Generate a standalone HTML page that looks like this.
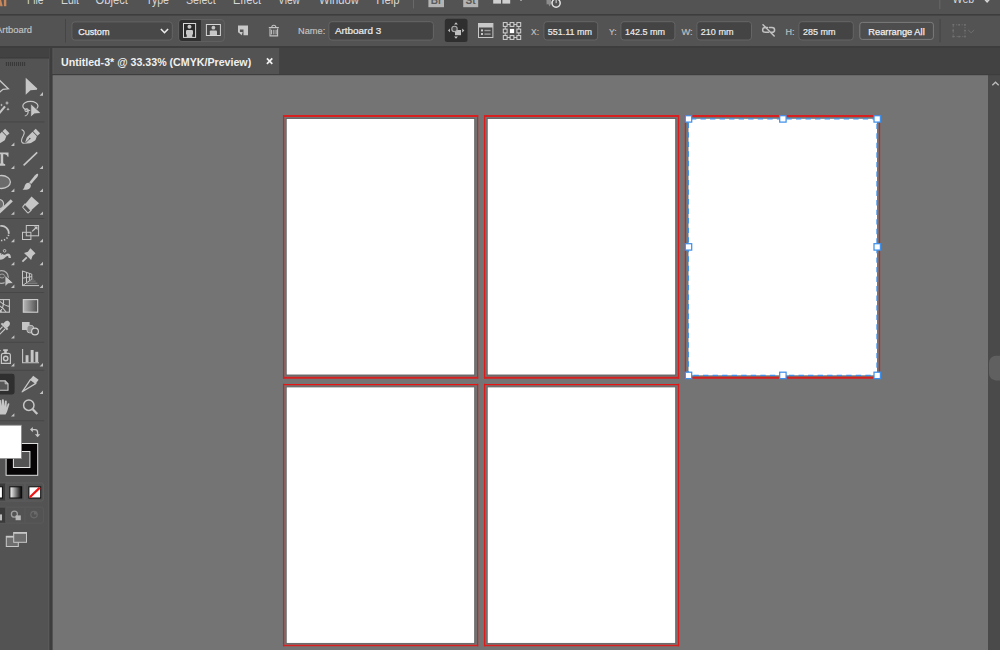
<!DOCTYPE html>
<html>
<head>
<meta charset="utf-8">
<title>Illustrator</title>
<style>
html,body{margin:0;padding:0;}
body{width:1000px;height:650px;overflow:hidden;background:#747474;position:relative;font-family:"Liberation Sans",sans-serif;}
svg{position:absolute;left:0;top:0;display:block;}
text{font-family:"Liberation Sans",sans-serif;}
</style>
</head>
<body>
<svg width="1000" height="650" viewBox="0 0 1000 650">
<defs>
<linearGradient id="gradTool" x1="0" y1="0" x2="1" y2="0"><stop offset="0" stop-color="#b8b8b8"/><stop offset="1" stop-color="#4e4e4e"/></linearGradient>
<linearGradient id="gradBW" x1="0" y1="0" x2="1" y2="0"><stop offset="0" stop-color="#ffffff"/><stop offset="1" stop-color="#000000"/></linearGradient>
<clipPath id="tbclip"><rect x="0" y="48" width="49" height="602"/></clipPath>
</defs>

<!-- ===== canvas ===== -->
<rect x="0" y="0" width="1000" height="650" fill="#747474"/>

<!-- ===== artboards ===== -->
<g id="artboards">
<!-- whites with thin dark edge -->
<g fill="#ffffff" stroke="#606060" stroke-width="0.9">
<rect x="286.2" y="118.5" width="188.5" height="256.5"/>
<rect x="487.2" y="118.5" width="188.5" height="256.5"/>
<rect x="286.2" y="386.9" width="188.5" height="256.5"/>
<rect x="487.2" y="386.9" width="188.5" height="256.5"/>
</g>
<rect x="688.5" y="118.8" width="188.5" height="256.5" fill="#fff"/>
<!-- bleed lines: verticals -->
<g fill="none" stroke="#de1a1a" stroke-width="1.25">
<path d="M283.6 115 V378.6 M477.6 115 V378.6 M484.6 115 V378.6 M678.5 115 V378.6 M685.4 115 V378.6 M879.5 115 V378.6"/>
<path d="M283.6 383.8 V646.3 M477.6 383.8 V646.3 M484.6 383.8 V646.3 M678.5 383.8 V646.3"/>
</g>
<!-- bleed lines: horizontals -->
<g fill="none" stroke="#d82020">
<path d="M283 115.9 H478.2 M484 115.9 H679.1 M684.8 115.9 H880.1" stroke-width="2"/>
<path d="M283 377.75 H478.2 M484 377.75 H679.1 M684.8 377.75 H880.1" stroke-width="1.9"/>
<path d="M283 384.6 H478.2 M484 384.6 H679.1" stroke-width="1.35" stroke="#e81414"/>
<path d="M283 645.5 H478.2 M484 645.5 H679.1" stroke-width="1.6"/>
</g>
</g>
<g id="selection">
<path d="M688.3 118.8 H877 V375.3 H688.3 Z" fill="none" stroke="#3f90ea" stroke-width="1.3" stroke-dasharray="5.4 4.15" stroke-dashoffset="6.95"/>
<g fill="#ffffff" stroke="#3f90ea" stroke-width="1.25">
<rect x="685.3" y="115.7" width="6.4" height="6.4"/>
<rect x="779.7" y="115.7" width="6.4" height="6.4"/>
<rect x="874" y="115.7" width="6.4" height="6.4"/>
<rect x="685.3" y="243.7" width="6.4" height="6.4"/>
<rect x="874" y="243.7" width="6.4" height="6.4"/>
<rect x="685.3" y="372.2" width="6.4" height="6.4"/>
<rect x="779.7" y="372.2" width="6.4" height="6.4"/>
<rect x="874" y="372.2" width="6.4" height="6.4"/>
</g>
</g>
<!-- ARTBOARD-SELECTION-END -->

<!-- ===== scrollbar ===== -->
<rect x="988" y="75" width="12" height="575" fill="#4a4a4a"/>
<rect x="989" y="355.8" width="24" height="24.6" rx="7" ry="7" fill="#606060"/>
<path d="M992.3 85.3 L995.5 82.2 L998.7 85.3" fill="none" stroke="#bcbcbc" stroke-width="1.3"/>

<!-- ===== top bars ===== -->
<rect x="0" y="0" width="1000" height="48" fill="#535353"/>
<rect x="0" y="14" width="1000" height="1.6" fill="#3d3d3d"/>
<rect x="0" y="46" width="1000" height="2" fill="#3d3d3d"/>
<rect x="0" y="48" width="1000" height="26" fill="#424242"/>
<rect x="0" y="74" width="1000" height="1.2" fill="#3d3d3d"/>
<!-- tab -->
<rect x="52" y="48" width="227.2" height="26" fill="#535353"/>
<!-- toolbar -->
<rect x="0" y="58" width="49" height="592" fill="#535353"/>
<rect x="48" y="58.5" width="1" height="592" fill="#595959"/><rect x="49" y="48" width="1" height="602" fill="#474747"/><rect x="50" y="48" width="2.6" height="602" fill="#3d3d3d"/>
<g id="menubar">
<!-- Ai logo fragment -->
<path d="M-1.6 -1 H0.9 L2.7 6.2 H0.3 Z" fill="#c8885c"/><rect x="3.9" y="-1" width="2.4" height="7.2" fill="#c8885c"/>
<g font-size="12" fill="#d6d6d6">
<text x="27" y="4" textLength="16.6" lengthAdjust="spacingAndGlyphs">File</text>
<text x="61" y="4" textLength="18" lengthAdjust="spacingAndGlyphs">Edit</text>
<text x="95.6" y="4" textLength="32.4" lengthAdjust="spacingAndGlyphs">Object</text>
<text x="146" y="4" textLength="23" lengthAdjust="spacingAndGlyphs">Type</text>
<text x="186" y="4" textLength="29.6" lengthAdjust="spacingAndGlyphs">Select</text>
<text x="233" y="4" textLength="28" lengthAdjust="spacingAndGlyphs">Effect</text>
<text x="278" y="4" textLength="22" lengthAdjust="spacingAndGlyphs">View</text>
<text x="319" y="4" textLength="40" lengthAdjust="spacingAndGlyphs">Window</text>
<text x="376.3" y="4" textLength="23.3" lengthAdjust="spacingAndGlyphs">Help</text>
<text x="952.6" y="2.6" textLength="21.6" lengthAdjust="spacingAndGlyphs">Web</text>
</g>
<rect x="413" y="0" width="1" height="8.5" fill="#696969"/>
<rect x="939.3" y="0" width="1" height="9" fill="#696969"/>
<!-- Br / St -->
<rect x="428.4" y="-2" width="15.6" height="9.2" fill="#b4b4b4"/>
<text x="430.8" y="4.2" font-size="10" font-weight="bold" fill="#5a5a5a">Br</text>
<rect x="463.2" y="-2" width="15" height="9.2" fill="#b4b4b4"/>
<text x="465.6" y="4.2" font-size="10" font-weight="bold" fill="#5a5a5a">St</text>
<!-- layout icon -->
<rect x="493.2" y="-2" width="7.8" height="5.6" fill="#cfcfcf"/>
<rect x="502.4" y="-2" width="7.8" height="5.6" fill="#cfcfcf"/>
<path d="M519.5 -1 L521 0.8 L522.5 -1" fill="none" stroke="#bdbdbd" stroke-width="1"/>
<!-- gpu icon -->
<path d="M546.4 -1 L550.6 -1 L551.6 2.6 L549.6 6.6 L548.2 4 L546.6 4.6 Z" fill="#8d8d8d"/>
<circle cx="556.1" cy="3.1" r="4.1" fill="none" stroke="#e4e4e4" stroke-width="1.5"/>
<rect x="555.2" y="-2" width="1.8" height="5.6" fill="#e4e4e4" stroke="#535353" stroke-width="0.8"/>
<!-- workspace chevron -->
<path d="M984 -1.6 L987.1 1.8 L990.2 -1.6" fill="none" stroke="#d8d8d8" stroke-width="1.5"/>
</g>
<!-- MENUBAR-END -->
<g id="controlbar">
<text x="-4" y="32.9" font-size="9.5" fill="#c4c4c4" stroke="#c4c4c4" stroke-width="0.15" textLength="36" lengthAdjust="spacingAndGlyphs">Artboard</text>
<rect x="65" y="19" width="1" height="23.4" fill="#454545"/>
<!-- preset dropdown -->
<rect x="71.9" y="21.9" width="100.4" height="18.2" rx="3" ry="3" fill="#484848" stroke="#646464" stroke-width="1"/>
<text x="78.2" y="35.3" font-size="9.5" fill="#f0f0f0" stroke="#f0f0f0" stroke-width="0.25" textLength="31.3" lengthAdjust="spacingAndGlyphs">Custom</text>
<path d="M160.9 29 L164.5 32.7 L168.1 29" fill="none" stroke="#ececec" stroke-width="1.6"/>
<!-- orientation group -->
<rect x="178.7" y="19.6" width="45.6" height="21.8" rx="3.2" ry="3.2" fill="#535353" stroke="#626262" stroke-width="1"/>
<path d="M182.2 20.1 H200.9 V40.9 H182.2 Q179.2 40.9 179.2 37.9 V23.1 Q179.2 20.1 182.2 20.1 Z" fill="#2f2f2f"/>
<!-- portrait icon -->
<rect x="183.5" y="23.5" width="12.1" height="13.9" fill="#2a2a2a" stroke="#d8d8d8" stroke-width="1"/>
<circle cx="189.45" cy="26.7" r="2" fill="#c6c6c6"/>
<path d="M186.7 37 V34.6 H186 V31.2 Q186 30 187.2 30 H191.8 Q193 30 193 31.2 V34.6 H192.3 V37 Z" fill="#c6c6c6"/>
<!-- landscape icon -->
<rect x="206.4" y="24.5" width="14" height="11" fill="#464646" stroke="#d4d4d4" stroke-width="1"/>
<circle cx="213.4" cy="27.7" r="1.9" fill="#c6c6c6"/>
<path d="M209.8 35 V31.6 Q209.8 30.6 210.8 30.6 H216 Q217 30.6 217 31.6 V35 Z" fill="#c6c6c6"/>
<!-- new artboard icon -->
<path d="M238 25.6 H248 V35.2 H243.5 V29.4 H239.9 V32.2 H238 Z" fill="#c8c8c8"/>
<path d="M238 32 H242.7 L241.7 35.3 Z" fill="#c8c8c8"/>
<!-- trash -->
<g fill="none" stroke="#c4c4c4" stroke-width="1.1">
<path d="M271.8 27.2 Q271.8 25.2 273.8 25.2 Q275.8 25.2 275.8 27.2"/>
<path d="M268.8 27.6 H278.8" stroke-width="1.2"/>
<path d="M270 28.6 V35.9 H277.6 V28.6"/>
<path d="M271.6 29.8 V34.4 M273.85 29.8 V34.4 M276.1 29.8 V34.4" stroke-width="1"/>
</g>
<!-- name -->
<text x="298" y="34.3" font-size="9.5" fill="#c4c4c4" stroke="#c4c4c4" stroke-width="0.15" textLength="27.2" lengthAdjust="spacingAndGlyphs">Name:</text>
<rect x="328.9" y="21.7" width="104.5" height="18.4" rx="3" ry="3" fill="#444444" stroke="#656565" stroke-width="1"/>
<text x="334.9" y="34.3" font-size="9.5" fill="#ececec" stroke="#ececec" stroke-width="0.2" textLength="46.3" lengthAdjust="spacingAndGlyphs">Artboard 3</text>
<!-- move artwork with artboard -->
<rect x="444.8" y="18.8" width="22.7" height="23.2" rx="2.5" ry="2.5" fill="#2f2f2f"/>
<path d="M454.1 24.4 L456 22.2 L457.9 24.4 Z M454.1 36.4 L456 38.7 L457.9 36.4 Z M449.9 28.6 L448 30.4 L449.9 32.3 Z M462.2 28.6 L464.3 30.5 L462.2 32.4 Z" fill="#c4c4c4"/>
<rect x="455" y="30" width="6" height="5.2" fill="#c0c0c0"/>
<circle cx="454.5" cy="29" r="2.7" fill="#4a4a4a" stroke="#b0b0b0" stroke-width="1.1"/>
<!-- artboard options -->
<rect x="478.5" y="23.5" width="14.4" height="14" fill="#494949" stroke="#c8c8c8" stroke-width="1"/>
<rect x="478.5" y="23.5" width="14.4" height="4" fill="#c8c8c8"/>
<rect x="481" y="29.4" width="2" height="2" fill="#c8c8c8"/>
<rect x="481" y="33" width="2" height="2" fill="#c8c8c8"/>
<rect x="484.4" y="29.8" width="6.2" height="1.4" fill="#9a9a9a"/>
<rect x="484.4" y="33.4" width="6.2" height="1.4" fill="#9a9a9a"/>
<!-- reference point -->
<g fill="none" stroke="#d0d0d0" stroke-width="1">
<path d="M505.2 24.5 H518.8 V37.5 H505.2 Z" stroke-width="0.9"/>
</g>
<g fill="#4b4b4b" stroke="#d6d6d6" stroke-width="1">
<rect x="503.3" y="22.6" width="3.8" height="3.8"/><rect x="510.1" y="22.6" width="3.8" height="3.8"/><rect x="516.9" y="22.6" width="3.8" height="3.8"/>
<rect x="503.3" y="29.1" width="3.8" height="3.8"/><rect x="516.9" y="29.1" width="3.8" height="3.8"/>
<rect x="503.3" y="35.6" width="3.8" height="3.8"/><rect x="510.1" y="35.6" width="3.8" height="3.8"/><rect x="516.9" y="35.6" width="3.8" height="3.8"/>
</g>
<rect x="509.9" y="28.9" width="4.2" height="4.2" fill="#ffffff"/>
<!-- X Y W H -->
<g font-size="9.5" fill="#c2c2c2" stroke="#c2c2c2" stroke-width="0.15">
<text x="531" y="34.6" textLength="8" lengthAdjust="spacingAndGlyphs">X:</text>
<text x="609" y="34.6" textLength="7.6" lengthAdjust="spacingAndGlyphs">Y:</text>
<text x="681.5" y="34.6" textLength="11.2" lengthAdjust="spacingAndGlyphs">W:</text>
<text x="785.5" y="34.6" textLength="9" lengthAdjust="spacingAndGlyphs">H:</text>
</g>
<g fill="#444444" stroke="#656565" stroke-width="1">
<rect x="543.9" y="21.7" width="53.8" height="18.3" rx="3" ry="3"/>
<rect x="620.9" y="21.7" width="54" height="18.3" rx="3" ry="3"/>
<rect x="696.9" y="21.7" width="54.6" height="18.3" rx="3" ry="3"/>
<rect x="798.9" y="21.7" width="54.4" height="18.3" rx="3" ry="3"/>
</g>
<g font-size="9.5" fill="#ececec" stroke="#ececec" stroke-width="0.2">
<text x="547.8" y="34.6" textLength="44.2" lengthAdjust="spacingAndGlyphs">551.11 mm</text>
<text x="625" y="34.6" textLength="40" lengthAdjust="spacingAndGlyphs">142.5 mm</text>
<text x="700.8" y="34.6" textLength="32.7" lengthAdjust="spacingAndGlyphs">210 mm</text>
<text x="803" y="34.6" textLength="32.5" lengthAdjust="spacingAndGlyphs">285 mm</text>
</g>
<!-- broken link -->
<g fill="none" stroke="#c2c2c2" stroke-width="1.5" stroke-linecap="round">
<path d="M767.4 27.5 H765.2 Q762.6 27.5 762.6 29.9 Q762.6 32.3 765.2 32.3 H768.6"/>
<path d="M769.4 27.5 H772 Q774.6 27.5 774.6 29.9 Q774.6 32.3 772 32.3 H771.4"/>
<path d="M763 24.8 L774.2 36"/>
</g>
<!-- rearrange all -->
<rect x="859.8" y="22.4" width="73.6" height="17" rx="2.5" ry="2.5" fill="#4d4d4d" stroke="#7c7c7c" stroke-width="1"/>
<text x="868.3" y="34.5" font-size="9.5" fill="#f2f2f2" stroke="#f2f2f2" stroke-width="0.25" textLength="56.4" lengthAdjust="spacingAndGlyphs">Rearrange All</text>
<rect x="939.6" y="19" width="1" height="23.2" fill="#454545"/>
<!-- dim icon -->
<rect x="953.2" y="24.8" width="11.8" height="11.8" fill="none" stroke="#6e6e6e" stroke-width="1" stroke-dasharray="1.2 1.6"/>
<g fill="#727272"><rect x="952.4" y="24" width="1.6" height="1.6"/><rect x="964.2" y="24" width="1.6" height="1.6"/><rect x="952.4" y="35.8" width="1.6" height="1.6"/><rect x="964.2" y="35.8" width="1.6" height="1.6"/><rect x="958.3" y="24" width="1.6" height="1.6"/><rect x="958.3" y="35.8" width="1.6" height="1.6"/><rect x="952.4" y="29.9" width="1.6" height="1.6"/><rect x="964.2" y="29.9" width="1.6" height="1.6"/></g>
<path d="M968.2 30 L971.2 32.8 L974.2 30" fill="none" stroke="#6e6e6e" stroke-width="1"/>
</g>
<!-- CONTROLBAR-END -->
<g id="tabtext">
<text x="61" y="65.8" font-size="11" font-weight="bold" fill="#f0f0f0" textLength="190.2" lengthAdjust="spacingAndGlyphs">Untitled-3* @ 33.33% (CMYK/Preview)</text>
<path d="M266.9 58.4 L272.3 63.8 M272.3 58.4 L266.9 63.8" fill="none" stroke="#f0f0f0" stroke-width="1.7"/>
<rect x="0" y="57.4" width="49" height="1.1" fill="#3b3b3b"/>
<rect x="52.6" y="48" width="0.9" height="26" fill="#5a5a5a"/>
<!-- gripper -->
<path d="M6.40 61.9 V65.9 M8.42 61.9 V65.9 M10.44 61.9 V65.9 M12.47 61.9 V65.9 M14.49 61.9 V65.9 M16.51 61.9 V65.9 M18.53 61.9 V65.9 M20.55 61.9 V65.9 M22.58 61.9 V65.9 M24.60 61.9 V65.9" stroke="#393939" stroke-width="1.05" fill="none"/>
</g>
<!-- TABTEXT-END -->
<g id="toolbar" clip-path="url(#tbclip)">
<!-- separators -->
<g fill="#474747">
<rect x="0" y="121.4" width="44.2" height="1"/><rect x="0" y="218" width="44.2" height="1"/><rect x="0" y="292" width="44.2" height="1"/>
<rect x="0" y="341.8" width="44.2" height="1"/><rect x="0" y="369.8" width="44.2" height="1"/><rect x="0" y="420.2" width="44.2" height="1"/>
</g>
<!-- flyout triangles -->
<g fill="#c2c2c2">
<path d="M43 92 V95.8 H39.6 Z"/>
<path d="M14.4 142.6 V146 H11 Z"/>
<path d="M14.4 165.6 V169 H11 Z"/><path d="M43 165.4 V169 H39.6 Z"/>
<path d="M14.4 188.6 V192 H11 Z"/><path d="M43 188.6 V192 H39.6 Z"/>
<path d="M14.4 211.4 V214.8 H11 Z"/><path d="M43 211.4 V214.8 H39.6 Z"/>
<path d="M14.4 238.8 V242.2 H11 Z"/><path d="M43 238.8 V242.2 H39.6 Z"/>
<path d="M14.4 261.8 V265.2 H11 Z"/><path d="M43 261.8 V265.2 H39.6 Z"/>
<path d="M14.4 284.6 V288 H11 Z"/><path d="M43 284.6 V288 H39.6 Z"/>
<path d="M14.4 335.2 V338.6 H11 Z"/>
<path d="M14.4 363 V366.4 H11 Z"/><path d="M43 363 V366.4 H39.6 Z"/>
<path d="M43 390.6 V394 H39.6 Z"/>
<path d="M14.4 413.2 V416.6 H11 Z"/>
</g>
<!-- ROW1 -->
<path d="M-2 78.8 L8.3 88.8 L3 89.3 L-1.5 93" fill="none" stroke="#c6c6c6" stroke-width="1.35" stroke-linejoin="miter"/>
<path d="M25.7 77.7 L37.3 88.6 L36.9 89.7 L30.5 90.3 L25.7 94.8 Z" fill="#c6c6c6"/>
<!-- ROW2 wand -->
<path d="M-1 113.6 L5 106.4" stroke="#c6c6c6" stroke-width="2.2" fill="none"/>
<path d="M7 100.8 L7.6 102.4 L9.2 103 L7.6 103.6 L7 105.2 L6.4 103.6 L4.8 103 L6.4 102.4 Z" fill="#c6c6c6"/>
<path d="M8 107.6 L8.5 108.7 L9.6 109.2 L8.5 109.7 L8 110.8 L7.5 109.7 L6.4 109.2 L7.5 108.7 Z" fill="#c6c6c6"/>
<path d="M1.5 103.6 L1.9 104.6 L2.9 105 L1.9 105.4 L1.5 106.4 L1.1 105.4 L0.1 105 L1.1 104.6 Z" fill="#c6c6c6"/>
<!-- ROW2 lasso -->
<ellipse cx="30.4" cy="105.9" rx="7.6" ry="4.6" fill="none" stroke="#c6c6c6" stroke-width="1.2"/>
<path d="M28 109.6 C28.4 111.8 25.4 112.2 25 110.4 C24.8 108.6 27.6 108.2 28 109.6 C28.6 112.2 27.8 115.6 24.8 116" fill="none" stroke="#c6c6c6" stroke-width="1.1"/>
<path d="M30.7 103.6 L40.3 112.4 L39.8 113.5 L34.4 113.9 L30.7 117.2 Z" fill="#c6c6c6" stroke="#535353" stroke-width="0.9"/>
<!-- ROW3 pen (left) -->
<g transform="translate(-30.6,0)">
<path d="M33.13 131.17 L35.73 128.69 L40.07 133.23 L37.47 135.71 Z" fill="#c6c6c6"/>
<path d="M32.5 131.8 L27.2 136.9 Q26.6 137.6 26.4 138.6 L24.8 143.7 L30 143.3 Q31 143.2 31.8 142.6 L35 140.4 Q35.6 139.9 35.8 139.2 L36.9 136.3 Z" fill="#c6c6c6"/>
<path d="M25 143.4 L29.4 139" stroke="#535353" stroke-width="0.9" fill="none"/>
<circle cx="29.8" cy="138.6" r="0.8" fill="#535353"/>
</g>
<!-- ROW3 curvature -->
<path d="M33.13 131.17 L35.73 128.69 L40.07 133.23 L37.47 135.71 Z" fill="#c6c6c6"/>
<path d="M32.5 131.8 L27.2 136.9 Q26.6 137.6 26.4 138.6 L24.8 143.7 L30 143.3 Q31 143.2 31.8 142.6 L35 140.4 Q35.6 139.9 35.8 139.2 L36.9 136.3 Z" fill="#c6c6c6"/>
<path d="M25 143.4 L29.4 139" stroke="#535353" stroke-width="0.9" fill="none"/>
<circle cx="29.8" cy="138.6" r="0.8" fill="#535353"/>
<path d="M21.6 129.4 C24.6 130.6 24.8 133 23.4 135.6 C21.8 138.4 20.4 141.4 22.4 142.8 C23.2 143.4 24 143.4 24.8 143.2" fill="none" stroke="#c6c6c6" stroke-width="1.1"/>
<!-- ROW4 T -->
<path d="M-4.6 152.4 H8.5 V156.8 H7.6 Q7.2 154.3 4.8 154.3 H3.2 V162.6 Q3.2 164 5.2 164.3 V165.7 H-1.2 V164.3 Q0.7 164 0.7 162.6 V154.3 H-4.6 Z" fill="#c6c6c6"/>
<path d="M23.6 165.3 L37.2 152.3" stroke="#c6c6c6" stroke-width="1.6" fill="none"/>
<!-- ROW5 ellipse + brush -->
<ellipse cx="1.6" cy="182" rx="8.8" ry="6.5" fill="#6b6b6b" stroke="#c6c6c6" stroke-width="1.3"/>
<path d="M37.9 173.8 C38.6 174.6 38 176 37 177.2 L31.2 184 L29.2 182.4 L34.8 175.6 C35.8 174.4 37 173.2 37.9 173.8 Z" fill="#c6c6c6"/>
<path d="M28.2 182.8 C30.8 183.2 31.8 186 30 188 C28.2 190 25.4 189.7 22.6 189.7 C24.6 188.4 24.2 186.6 25.2 184.8 C26 183.4 27.2 182.6 28.2 182.8 Z" fill="#c6c6c6"/>
<!-- ROW6 shaper + eraser -->
<circle cx="-1" cy="204" r="4.6" fill="#6b6b6b" stroke="#c6c6c6" stroke-width="1.1"/>
<path d="M11.8 200.4 L-1 212.4" stroke="#c6c6c6" stroke-width="2.9" fill="none"/>
<path d="M31.5 196.4 L39 203.2 L31 210.4 L25 204.2 Z" fill="#c6c6c6"/>
<path d="M25 204.2 L31 210.4 L28.3 212.8 Q27.9 213.1 27.5 212.7 L22.9 207.5 Q22.6 207.1 23 206.7 Z" fill="none" stroke="#c6c6c6" stroke-width="1.1"/>
<!-- ROW7 rotate + scale -->
<path d="M0.23 226 A7.3 7.3 0 0 1 8.77 233.84" fill="none" stroke="#c6c6c6" stroke-width="1.7"/>
<path d="M8.64 234.72 A7.3 7.3 0 0 1 0.23 240.39" fill="none" stroke="#c6c6c6" stroke-width="1.6" stroke-dasharray="1.4 1.6"/>
<g fill="none" stroke="#c6c6c6" stroke-width="1">
<rect x="26.3" y="225.5" width="12.3" height="10.3"/>
<rect x="22.5" y="232.3" width="8.4" height="7.2"/>
<path d="M32.2 231.4 L36 227.8" stroke-width="1.3"/>
</g>
<path d="M33.9 226.5 H37.5 V230.1 Z" fill="#c6c6c6"/>
<!-- ROW8 width + pin -->
<path d="M-2 252.9 C2 252.6 3 256 5.4 254.4 C7.6 252.8 10.8 252.6 10.9 257.9 L8.6 257.9 C8.4 255.5 7.4 255.5 6 256.7 C3.6 258.9 2 260 -2 259.8 Z" fill="#c6c6c6"/>
<circle cx="4.6" cy="250.8" r="1.3" fill="#535353" stroke="#c6c6c6" stroke-width="0.9"/>
<path d="M3.8 251.9 L1.4 254.6" stroke="#535353" stroke-width="0.9" fill="none"/>
<path d="M24 252.9 L27.9 251.8 L30.4 248.2 L35.5 253.2 L32.5 256.1 L31.1 260.1 Z" fill="#c6c6c6"/>
<path d="M26.8 257.4 L22.4 261.7" stroke="#c6c6c6" stroke-width="1.8" fill="none"/>
<!-- ROW9 shape builder + perspective -->
<circle cx="1.8" cy="277" r="6.4" fill="none" stroke="#b0b0b0" stroke-width="1.2"/>
<ellipse cx="2" cy="276" rx="2.6" ry="2" fill="none" stroke="#a8a8a8" stroke-width="0.9"/>
<path d="M5 275.4 L12.7 282.4 L12.2 283.4 L8 283.8 L5 286.6 Z" fill="#c6c6c6" stroke="#535353" stroke-width="0.8"/>
<g fill="none" stroke="#c6c6c6" stroke-width="1">
<path d="M22.5 270.8 V285.9 M22.5 271 L31.8 274.2 V279.2 L22.5 285.6"/>
<path d="M26.5 272.3 V283 M29.4 273.3 V281 M22.5 278.2 L31.8 276.6" stroke-width="1"/>
<path d="M22.5 285.6 H39"/>
<path d="M26 283.2 H37.4" stroke="#9a9a9a" stroke-width="0.8"/>
<path d="M29 281.1 H35.6" stroke="#8a8a8a" stroke-width="0.8"/>
<path d="M31.8 279.2 H34" stroke="#7a7a7a" stroke-width="0.8"/>
</g>
<!-- ROW10 mesh + gradient -->
<g fill="none" stroke="#c6c6c6" stroke-width="1.1">
<rect x="-6" y="299.6" width="15.4" height="12.6"/>
<path d="M-2 300 C2 303 5 306 9.4 306.4 M-3 305 C1 306 4 309 6 312 M3.4 300 C4 304 3 308 0 312 M-3 309.6 C-1 310 0.6 311 1.6 312" stroke-width="1.1"/>
</g>
<rect x="23.3" y="299.6" width="14.4" height="12.6" fill="url(#gradTool)" stroke="#d0d0d0" stroke-width="1.1"/>
<!-- ROW11 eyedropper + blend -->
<path d="M5 321.8 C7.4 319 11.6 322.4 9.4 325.4 L7 328 L2.8 324 Z" fill="#c6c6c6"/>
<path d="M1.4 323.4 L7.6 329.6" stroke="#c6c6c6" stroke-width="2" fill="none"/>
<path d="M2.6 326.6 L-3 332.6 M5 329 L-1 335" stroke="#c6c6c6" stroke-width="1.1" fill="none"/>
<rect x="22" y="322" width="7.6" height="8" fill="#c4c4c4"/>
<rect x="27" y="325.4" width="6.6" height="7.4" rx="2.4" ry="2.4" fill="#8a8a8a" stroke="#c4c4c4" stroke-width="1"/>
<circle cx="35" cy="331.5" r="3.4" fill="#535353" stroke="#d0d0d0" stroke-width="1.2"/>
<!-- ROW12 sprayer + graph -->
<path d="M1.4 363.4 V355.4 Q1.4 353.4 3.4 353.4 H8.4 Q10.4 353.4 10.4 355.4 V363.4 Z" fill="none" stroke="#c6c6c6" stroke-width="1.2"/>
<circle cx="5.7" cy="358.5" r="2.2" fill="none" stroke="#c6c6c6" stroke-width="1.4"/>
<path d="M3.2 349.2 H7.8 V351 H6.8 V353 H4.2 V351 H3.2 Z" fill="#c6c6c6"/>
<rect x="-1" y="350" width="1.6" height="1.2" fill="#c6c6c6"/>
<path d="M22.6 349 V362.7 H39" fill="none" stroke="#c6c6c6" stroke-width="1.1"/>
<rect x="25.6" y="355.2" width="2.9" height="7" fill="#c6c6c6"/>
<rect x="30.7" y="350" width="2.9" height="12.2" fill="#c6c6c6"/>
<rect x="35.3" y="351.8" width="2.9" height="10.4" fill="#c6c6c6"/>
<!-- ROW13 artboard + slice -->
<path d="M-3 373.7 H12.2 Q14.6 373.7 14.6 376.1 V392 Q14.6 394.4 12.2 394.4 H-3 Z" fill="#2f2f2f"/>
<path d="M-3 380.9 H5.2 L8 383.8 V390.2 H-3 Z" fill="#565656" stroke="#c6c6c6" stroke-width="1.1"/>
<path d="M5.2 380.9 V383.8 H8" fill="none" stroke="#c6c6c6" stroke-width="1"/>
<path d="M22.2 391.8 L30.6 379.4 L35.9 383.4 Z" fill="none" stroke="#c6c6c6" stroke-width="1.25" stroke-linejoin="round"/>

<path d="M30.2 379.4 L33.2 375.7 L38.6 379.7 L35.8 383.6 Z" fill="#c6c6c6"/>
<!-- ROW14 hand + zoom -->
<path d="M-2 401 Q-2 399.6 -0.6 399.8 L0.8 400 L1.4 406 L1.8 400.2 Q2 399.2 3 399.3 Q3.9 399.4 3.9 400.4 L4.2 406.2 L4.9 401.2 Q5.1 400.3 6 400.5 Q6.9 400.7 6.8 401.6 L6.6 407.6 L7.6 404 Q8 403 8.8 403.3 Q9.6 403.6 9.3 404.6 L7.6 410 Q7 412.6 5.6 414.4 H-2 Z" fill="#c6c6c6"/>
<circle cx="28.8" cy="405.2" r="5.2" fill="none" stroke="#c6c6c6" stroke-width="1.5"/>
<path d="M32.7 409.3 L37.3 414" stroke="#c6c6c6" stroke-width="2.3" fill="none"/>
<!-- fill / stroke -->
<rect x="6.1" y="443.5" width="31.6" height="31.8" fill="#060404" stroke="#dedede" stroke-width="1"/>
<rect x="13.4" y="451.5" width="16.5" height="16" fill="#535353" stroke="#e6e6e6" stroke-width="1"/>
<rect x="-2" y="425.2" width="23.4" height="33.4" fill="#ffffff" stroke="#8c8c8c" stroke-width="0.8"/>
<!-- swap arrow -->
<path d="M31.6 429.6 H35 Q37.6 429.6 37.6 432.4 V435" fill="none" stroke="#c6c6c6" stroke-width="1.3"/>
<path d="M30 429.6 L32.8 426.9 V432.3 Z" fill="#c6c6c6"/>
<path d="M37.6 437.2 L34.9 434.2 H40.3 Z" fill="#c6c6c6"/>
<!-- color/gradient/none -->
<rect x="-3" y="483" width="46.4" height="18" rx="2" ry="2" fill="none" stroke="#5f5f5f" stroke-width="1"/>
<rect x="-3" y="483.5" width="8.8" height="17" fill="#3a3a3a"/>
<path d="M5.8 483.5 V500.5 M24.9 483.5 V500.5" stroke="#5f5f5f" stroke-width="1" fill="none"/>
<rect x="-4" y="486.8" width="6.4" height="11.2" fill="#ffffff" stroke="#0a0a0a" stroke-width="1"/>
<rect x="9.9" y="486.8" width="11.8" height="11.2" fill="url(#gradBW)" stroke="#0a0a0a" stroke-width="1"/>
<rect x="28.9" y="486.8" width="11.8" height="11.2" fill="#ffffff" stroke="#0a0a0a" stroke-width="1"/>
<path d="M29.8 497.2 L39.8 487.6" stroke="#f01414" stroke-width="2.2" fill="none"/>
<!-- draw modes -->
<rect x="-3" y="507.2" width="46.4" height="16" rx="2" ry="2" fill="none" stroke="#5a5a5a" stroke-width="1"/>
<rect x="-3" y="507.7" width="8.8" height="15" fill="#3a3a3a"/>
<path d="M5.8 507.7 V522.7 M24.9 507.7 V522.7" stroke="#5a5a5a" stroke-width="1" fill="none"/>
<rect x="-3" y="514.4" width="5" height="6" fill="#bdbdbd"/>
<circle cx="14.4" cy="514.2" r="3" fill="none" stroke="#a0a0a0" stroke-width="1.3"/>
<rect x="15.6" y="515.4" width="5.2" height="4.8" fill="#b8b8b8"/>
<circle cx="34" cy="514.6" r="3.2" fill="none" stroke="#6a6a6a" stroke-width="1.2"/>
<path d="M34 514.6 V511.6 A3 3 0 0 1 37 514.6 Z" fill="#6a6a6a"/>
<!-- screen mode -->
<rect x="6.3" y="536.3" width="12" height="10.2" fill="#6e6e6e" stroke="#c8c8c8" stroke-width="1"/>
<rect x="6.3" y="536" width="12" height="1.6" fill="#c8c8c8"/>
<rect x="13.7" y="532.5" width="12.8" height="9.8" fill="#6e6e6e" stroke="#c8c8c8" stroke-width="1"/>
<rect x="13.7" y="532.2" width="12.8" height="1.6" fill="#c8c8c8"/>
</g>
<!-- TOOLBAR-END -->
</svg>
</body>
</html>
